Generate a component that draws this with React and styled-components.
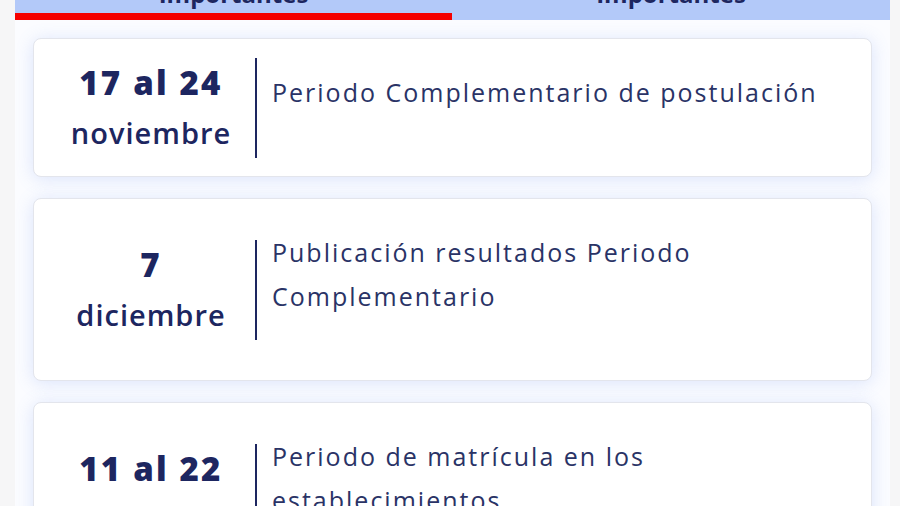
import React from "react";
import styled, { createGlobalStyle } from "styled-components";

const GlobalStyle = createGlobalStyle`
  body {
    margin: 0;
    background: #f6f6f7;
    overflow: hidden;
    font-family: "Open Sans", "Liberation Sans", sans-serif;
  }
`;

const Panel = styled.section`
  width: 875px;
  margin: -28px 0 0 15px;
  background: #fbfcff;
  min-height: 560px;
`;

const Tabs = styled.div`
  display: grid;
  grid-template-columns: 437px 1fr;
  background: #b3c9f9;
`;

const Tab = styled.button`
  border: 0;
  background: transparent;
  padding: 8px 0 5px;
  border-bottom: 7px solid ${(props) => (props.active ? "#f50000" : "transparent")};
  font-family: "Open Sans", sans-serif;
  font-weight: 700;
  font-size: 24px;
  line-height: 28px;
  color: #1d2660;
  text-align: center;
`;

const List = styled.div`
  display: flex;
  flex-direction: column;
  gap: 21px;
  padding: 18px 18px;
`;

const Card = styled.article`
  display: flex;
  align-items: center;
  background: #fff;
  border: 1px solid #e3e5ec;
  border-radius: 8px;
  padding: 19px 0 18px;
  box-shadow: 0 2px 18px rgba(90, 130, 235, 0.2);
`;

const DateCol = styled.div`
  flex: 0 0 208px;
  padding-left: 13px;
  border-right: 2px solid #1d2660;
  text-align: center;
  color: #1d2660;
`;

const Day = styled.div`
  font-family: "Open Sans", sans-serif;
  font-weight: 800;
  font-size: 33px;
  line-height: 50px;
  letter-spacing: 2.2px;
`;

const Month = styled.div`
  font-family: "Open Sans", sans-serif;
  font-weight: 560;
  font-size: 29px;
  line-height: 50px;
  letter-spacing: 1px;
`;

const Desc = styled.p`
  flex: 1;
  margin: 0;
  padding: 12px 40px 44px 15px;
  font-family: "Open Sans", sans-serif;
  font-size: 25px;
  line-height: 44px;
  letter-spacing: 2px;
  color: #2a3366;
`;

const events = [
  { day: "17 al 24", month: "noviembre", text: "Periodo Complementario de postulación" },
  { day: "7", month: "diciembre", text: "Publicación resultados Periodo Complementario" },
  { day: "11 al 22", month: "diciembre", text: "Periodo de matrícula en los establecimientos" },
];

export default function App() {
  return (
    <>
      <GlobalStyle />
      <Panel>
        <Tabs>
          <Tab active>Importantes</Tab>
          <Tab>Importantes</Tab>
        </Tabs>
        <List>
          {events.map((ev) => (
            <Card key={ev.text}>
              <DateCol>
                <Day>{ev.day}</Day>
                <Month>{ev.month}</Month>
              </DateCol>
              <Desc>{ev.text}</Desc>
            </Card>
          ))}
        </List>
      </Panel>
    </>
  );
}
